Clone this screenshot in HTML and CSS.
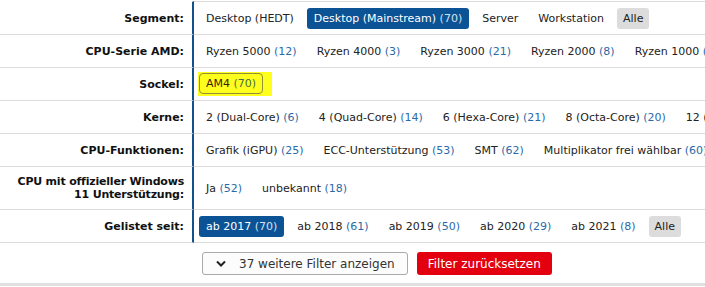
FILE: index.html
```html
<!DOCTYPE html>
<html lang="de">
<head>
    <meta charset="UTF-8">
    <title>Filter</title>
    <link rel="stylesheet" href="styles.css">
</head>
<body>

<div class="filters">
    <div class="label first">Segment:</div>
    <div class="values first">
        <span class="opt">Desktop (HEDT)</span>
        <span class="opt active">Desktop (Mainstream) <span class="cnt">(70)</span></span>
        <span class="opt">Server</span>
        <span class="opt">Workstation</span>
        <span class="opt all">Alle</span>
    </div>

    <div class="label">CPU-Serie AMD:</div>
    <div class="values">
        <span class="opt">Ryzen 5000 <span class="cnt">(12)</span></span>
        <span class="opt">Ryzen 4000 <span class="cnt">(3)</span></span>
        <span class="opt">Ryzen 3000 <span class="cnt">(21)</span></span>
        <span class="opt">Ryzen 2000 <span class="cnt">(8)</span></span>
        <span class="opt">Ryzen 1000 <span class="cnt">(12)</span></span>
    </div>

    <div class="label">Sockel:</div>
    <div class="values">
        <span class="marker"><span class="opt picked">AM4 <span class="cnt">(70)</span></span></span>
    </div>

    <div class="label">Kerne:</div>
    <div class="values">
        <span class="opt">2 (Dual-Core) <span class="cnt">(6)</span></span>
        <span class="opt">4 (Quad-Core) <span class="cnt">(14)</span></span>
        <span class="opt">6 (Hexa-Core) <span class="cnt">(21)</span></span>
        <span class="opt">8 (Octa-Core) <span class="cnt">(20)</span></span>
        <span class="opt">12 (Dodeca-Core) <span class="cnt">(5)</span></span>
    </div>

    <div class="label">CPU-Funktionen:</div>
    <div class="values">
        <span class="opt">Grafik (iGPU) <span class="cnt">(25)</span></span>
        <span class="opt">ECC-Unterstützung <span class="cnt">(53)</span></span>
        <span class="opt">SMT <span class="cnt">(62)</span></span>
        <span class="opt">Multiplikator frei wählbar <span class="cnt">(60)</span></span>
    </div>

    <div class="label tall">CPU mit offizieller Windows<br>11 Unterstützung:</div>
    <div class="values">
        <span class="opt">Ja <span class="cnt">(52)</span></span>
        <span class="opt">unbekannt <span class="cnt">(18)</span></span>
    </div>

    <div class="label">Gelistet seit:</div>
    <div class="values">
        <span class="opt active">ab 2017 <span class="cnt">(70)</span></span>
        <span class="opt">ab 2018 <span class="cnt">(61)</span></span>
        <span class="opt">ab 2019 <span class="cnt">(50)</span></span>
        <span class="opt">ab 2020 <span class="cnt">(29)</span></span>
        <span class="opt">ab 2021 <span class="cnt">(8)</span></span>
        <span class="opt all">Alle</span>
    </div>
</div>

<div class="actions">
    <button class="btn more">
        <svg width="10" height="7" viewBox="0 0 10 7"><path d="M1 1.5l4 4 4-4" fill="none" stroke="#222" stroke-width="2"/></svg>
        37 weitere Filter anzeigen
    </button>
    <button class="btn reset">Filter zurücksetzen</button>
</div>

</body>
</html>
```

FILE: styles.css
```css
* {
    box-sizing: border-box;
}
body {
    font-family: "DejaVu Sans", Verdana, sans-serif;
    font-size: 11px;
    color: #222;
    margin: 0;
    padding: 0;
    background-color: #fff;
    overflow: hidden;
}
.filters {
    display: grid;
    grid-template-columns: 194px 1fr;
    padding-top: 1px;
}
.label {
    text-align: right;
    font-weight: bold;
    color: #111;
    padding: 0 8px 0 4px;
    min-height: 33px;
    line-height: 13px;
    display: flex;
    align-items: center;
    justify-content: flex-end;
    border-right: 2px solid #13518d;
    border-bottom: 1px solid #ddd;
}
.label.tall {
    padding-top: 8px;
    padding-bottom: 8px;
    white-space: nowrap;
    letter-spacing: -0.2px;
}
.values {
    display: flex;
    align-items: center;
    gap: 6px;
    padding-left: 5px;
    border-bottom: 1px solid #ddd;
    white-space: nowrap;
    overflow: hidden;
}
.first {
    min-height: 34px;
    border-top: 1px solid #ddd;
}
.label.first {
    border-top-color: #fff;
}
.opt {
    display: inline-block;
    padding: 0 7px;
    height: 21px;
    line-height: 21px;
    border-radius: 3px;
    color: #222;
}
.cnt {
    color: #2b6aa8;
}
.opt.active {
    background-color: #0b5394;
    color: #fff;
}
.opt.active .cnt {
    color: #d3e1f0;
}
.opt.all {
    background-color: #dcdcdc;
    padding: 0 6px;
}
.marker {
    display: inline-block;
    background-color: #ffff1e;
    padding: 1px 9px 2px 1px;
    margin-left: -1px;
}
.opt.picked {
    height: 21px;
    line-height: 19px;
    padding: 0 6px;
    border: 1px solid #8f8f3c;
    border-radius: 4px;
    color: #3d2400;
}
.opt.picked .cnt {
    color: #3f7044;
}
.actions {
    display: flex;
    gap: 9px;
    padding: 9px 0 8px 202px;
    border-bottom: 3px solid #e0e0e0;
}
.btn {
    font-family: "DejaVu Sans", Verdana, sans-serif;
    font-size: 12px;
    height: 23px;
    border-radius: 3px;
    cursor: pointer;
}
.btn.more {
    display: flex;
    align-items: center;
    gap: 13px;
    padding: 0 12px 0 13px;
    background-color: #fcfcfc;
    border: 1px solid #aaa;
    color: #333;
}
.btn.reset {
    padding: 0 11px;
    background-color: #e3000f;
    border: none;
    color: #fff;
}
```
